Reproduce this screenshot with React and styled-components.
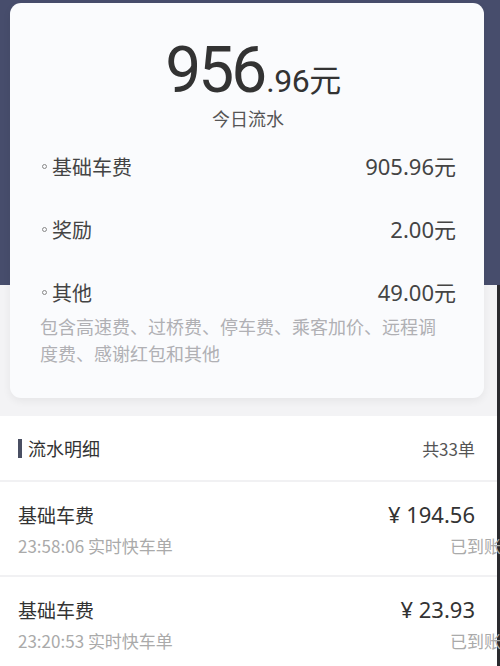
import React from "react";
import styled, { createGlobalStyle } from "styled-components";

const Global = createGlobalStyle`
  html, body { margin: 0; padding: 0; }
  body {
    font-family: "Noto Sans", "Noto Sans CJK SC", sans-serif;
    background: #ffffff;
    overflow: hidden;
  }
`;

const Page = styled.div`
  width: 500px;
  height: 666px;
  overflow: hidden;
  display: flex;
  flex-direction: column;
`;

const Hero = styled.div`
  background:
    linear-gradient(to left, #2a2a2e 0, #2a2a2e 3px, transparent 3px) right 285px / 3px 100% no-repeat,
    linear-gradient(#474d6c 0, #474d6c 285px, #f3f3f5 285px);
  padding: 3px 16px 18px 10px;
`;

const Card = styled.div`
  background: #fafbfd;
  border-radius: 11px;
  box-shadow: 0 3px 8px rgba(0, 0, 0, 0.06);
  padding: 36px 28px 31px 30px;
  display: flex;
  flex-direction: column;
`;

const Total = styled.div`
  display: flex;
  flex-direction: column;
  align-items: center;
  color: #333;
`;

const Amount = styled.div`
  display: flex;
  align-items: baseline;
  line-height: 1;
  margin-left: 10px;
`;

const Big = styled.span`
  font-family: Roboto, "Noto Sans", sans-serif;
  font-weight: 400;
  font-size: 64px;
  letter-spacing: -3px;
`;

const Small = styled.span`
  font-family: Roboto, "Noto Sans", "Noto Sans CJK SC", sans-serif;
  font-size: 32px;
  letter-spacing: -0.5px;
  margin-left: 2px;
`;

const Caption = styled.div`
  font-family: "Noto Sans CJK SC", sans-serif;
  font-size: 18px;
  color: #555;
  margin-top: 4px;
  line-height: 22px;
`;

const Rows = styled.div`
  margin-top: 6px;
  display: flex;
  flex-direction: column;
`;

const Row = styled.div`
  height: 63px;
  display: flex;
  align-items: center;
  justify-content: space-between;
  color: #444;
`;

const Label = styled.div`
  display: flex;
  align-items: center;
  gap: 5px;
  font-family: "Noto Sans CJK SC", sans-serif;
  font-size: 20px;
`;

const Dot = styled.span`
  width: 5px;
  height: 5px;
  border: 1.5px solid #888;
  border-radius: 50%;
  box-sizing: border-box;
  margin-left: 2px;
`;

const Value = styled.div`
  font-family: "Noto Sans", "Noto Sans CJK SC", sans-serif;
  font-size: 22px;
  color: #444;
  margin-top: -4px;
`;

const Desc = styled.div`
  font-family: "Noto Sans CJK SC", sans-serif;
  font-size: 18px;
  line-height: 27px;
  color: #b0b0b4;
  margin-top: -11px;
  padding-right: 14px;
`;

const List = styled.div`
  flex: 1;
  background: #fff;
  border-right: 3px solid #2a2a2e;
`;

const ListHead = styled.div`
  height: 64px;
  display: flex;
  align-items: center;
  justify-content: space-between;
  padding: 0 22px 0 18px;
  border-bottom: 2px solid #f1f1f3;
  font-family: "Noto Sans CJK SC", sans-serif;
`;

const HeadTitle = styled.div`
  display: flex;
  align-items: center;
  gap: 6px;
  font-size: 18px;
  color: #333;
`;

const Bar = styled.span`
  width: 4px;
  height: 19px;
  background: #4a4f63;
`;

const Count = styled.div`
  font-size: 17px;
  color: #555;
`;

const Item = styled.div`
  height: 93px;
  padding: 0 0 0 18px;
  display: flex;
  flex-direction: column;
  justify-content: center;
  gap: 4px;
  border-bottom: 2px solid #f1f1f3;
  font-family: "Noto Sans CJK SC", sans-serif;
`;

const Line = styled.div`
  display: flex;
  justify-content: space-between;
  align-items: center;
  padding-right: ${(p) => p.$pr}px;
`;

const ItemTitle = styled.div`
  font-size: 19px;
  color: #333;
`;

const Price = styled.div`
  font-family: "Noto Sans", "Noto Sans CJK SC", sans-serif;
  font-size: 22px;
  color: #333;
`;

const Sub = styled.div`
  font-size: 17px;
  color: #aaa;
`;

const Status = styled.div`
  font-size: 17px;
  color: #aaa;
  white-space: nowrap;
  margin-right: -4px;
`;

const breakdown = [
  { label: "基础车费", value: "905.96元" },
  { label: "奖励", value: "2.00元" },
  { label: "其他", value: "49.00元" },
];

const items = [
  { title: "基础车费", price: "¥ 194.56", time: "23:58:06", kind: "实时快车单" },
  { title: "基础车费", price: "¥ 23.93", time: "23:20:53", kind: "实时快车单" },
];

export default function App() {
  return (
    <Page>
      <Global />
      <Hero>
        <Card>
          <Total>
            <Amount>
              <Big>956</Big>
              <Small>.96元</Small>
            </Amount>
            <Caption>今日流水</Caption>
          </Total>
          <Rows>
            {breakdown.map((r) => (
              <Row key={r.label}>
                <Label>
                  <Dot />
                  {r.label}
                </Label>
                <Value>{r.value}</Value>
              </Row>
            ))}
          </Rows>
          <Desc>包含高速费、过桥费、停车费、乘客加价、远程调度费、感谢红包和其他</Desc>
        </Card>
      </Hero>
      <List>
        <ListHead>
          <HeadTitle>
            <Bar />
            流水明细
          </HeadTitle>
          <Count>共33单</Count>
        </ListHead>
        {items.map((it, i) => (
          <Item key={i}>
            <Line $pr={22}>
              <ItemTitle>{it.title}</ItemTitle>
              <Price>{it.price}</Price>
            </Line>
            <Line $pr={0}>
              <Sub>
                {it.time} {it.kind}
              </Sub>
              <Status>已到账</Status>
            </Line>
          </Item>
        ))}
      </List>
    </Page>
  );
}
